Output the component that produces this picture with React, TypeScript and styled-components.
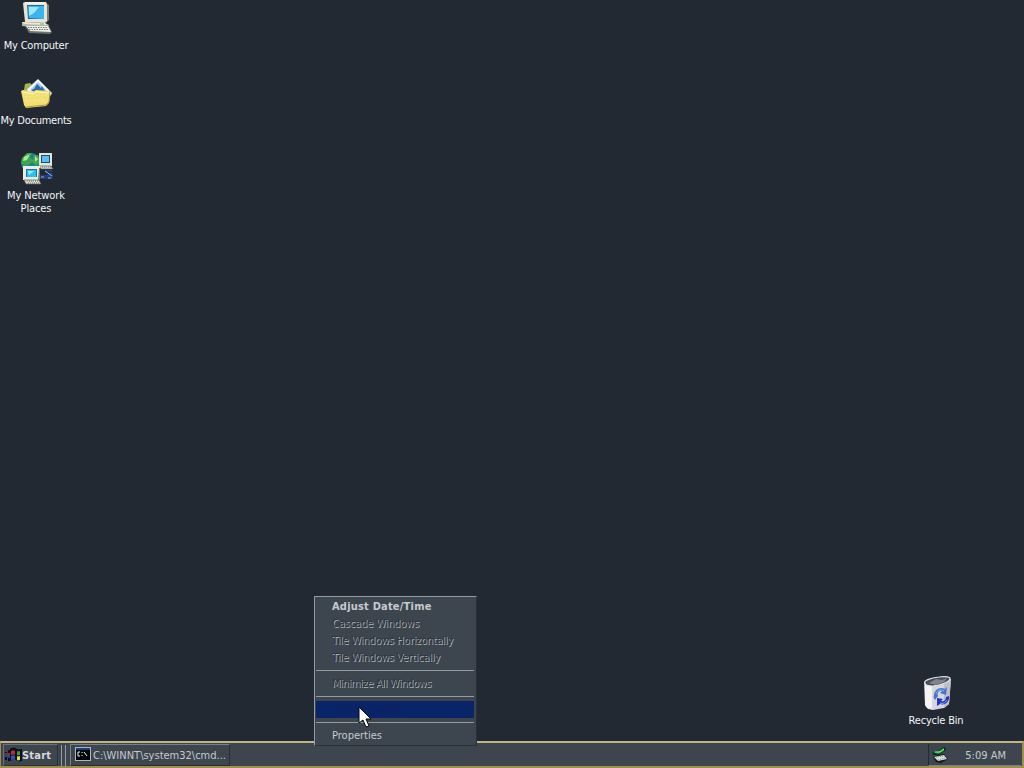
import React from "react";
import styled, { createGlobalStyle } from "styled-components";

const Global = createGlobalStyle`
  * { box-sizing: border-box; }
  body { margin: 0; overflow: hidden; background: #222932; }
`;

const Screen = styled.main`
  position: relative;
  display: flex;
  flex-direction: column;
  width: 1024px;
  height: 768px;
  background: #222932;
  font-family: "DejaVu Sans Condensed", "DejaVu Sans", sans-serif;
  font-stretch: condensed;
  font-size: 11px;
  line-height: 13px;
  color: #c5cad0;
  cursor: default;
`;

const Desktop = styled.section`
  flex: 1;
  display: flex;
  justify-content: space-between;
`;

const IconColumn = styled.div<{ $end?: boolean }>`
  display: flex;
  flex-direction: column;
  justify-content: ${(p) => (p.$end ? "flex-end" : "flex-start")};
  width: ${(p) => (p.$end ? 88 : 72)}px;
  padding-bottom: ${(p) => (p.$end ? 2 : 0)}px;
  margin-right: ${(p) => (p.$end ? 44 : 0)}px;
`;

const Shortcut = styled.div`
  display: flex;
  flex-direction: column;
  align-items: center;
  height: 75px;
  svg { display: block; margin: 1px 0 4px; }
`;

const BinShortcut = styled(Shortcut)`
  height: 65px;
  svg { margin: 0 0 4px; }
`;

const Label = styled.span<{ $spacing?: number }>`
  color: #f4f6f8;
  text-align: center;
  white-space: pre;
  letter-spacing: ${(p) => p.$spacing ?? 0}px;
`;

const Taskbar = styled.footer`
  display: flex;
  align-items: stretch;
  height: 27px;
  padding: 1px 1px 0 2px;
  background: #3d464e;
  border: 2px solid #a18d4e;
  border-top-color: #c4b684;
  border-left-width: 1px;
`;

const StartButton = styled.button`
  display: flex;
  align-items: center;
  width: 55px;
  padding: 0 0 0 1px;
  border: 1px solid;
  border-color: #69727b #2a3036 #2a3036 #69727b;
  background: #3d464e;
  color: #d5d9dd;
  font: bold 11px "DejaVu Sans Condensed", "DejaVu Sans", sans-serif;
  font-stretch: condensed;
  letter-spacing: 0.2px;
`;

const Grip = styled.div`
  width: 5px;
  margin: 1px 4px 0 3px;
  border-left: 1px solid #929aa2;
  border-right: 1px solid #929aa2;
`;

const TaskButton = styled.div`
  display: flex;
  align-items: center;
  gap: 2px;
  width: 160px;
  padding-left: 4px;
  border: 1px solid;
  border-color: #78818a #272d33 #272d33 #78818a;
  white-space: nowrap;
  svg { margin-top: -2px; }
`;

const Tray = styled.div`
  display: flex;
  align-items: center;
  justify-content: space-between;
  width: 93px;
  margin-left: auto;
  padding: 0 15px 0 2px;
  border-left: 1px solid #242a30;
  border-bottom: 1px solid #78818a;
  span { padding-top: 2px; }
`;

const Menu = styled.div`
  position: absolute;
  left: 314px;
  top: 596px;
  width: 163px;
  height: 150px;
  padding: 1px 2px 1px 1px;
  background: #3d464e;
  border: 1px solid;
  border-color: #929aa2 #2a3036 #2a3036 #929aa2;
`;

const MenuItem = styled.div<{ $kind?: "bold" | "disabled" | "selected"; $spacing?: number }>`
  height: 17px;
  padding: 1px 0 0 16px;
  line-height: 15px;
  white-space: nowrap;
  letter-spacing: ${(p) => p.$spacing ?? 0}px;
  font-weight: ${(p) => (p.$kind === "bold" ? "bold" : "normal")};
  color: ${(p) => (p.$kind === "disabled" ? "#2c333b" : p.$kind === "selected" ? "#0b2360" : "#c5cad0")};
  text-shadow: ${(p) => (p.$kind === "disabled" ? "1px 1px 0 #a9b1b9" : "none")};
  background: ${(p) => (p.$kind === "selected" ? "#0a246a" : "transparent")};
`;

const Separator = styled.hr`
  height: 1px;
  margin: 4px 0;
  border: 0;
  background: #929aa2;
`;

const Pointer = styled.svg`
  position: absolute;
  left: 358px;
  top: 706px;
`;

const ComputerIcon = () => (
  <svg width="34" height="34" viewBox="0 0 34 34">
    <path d="M27 2 30 4 30 19 27 22Z" fill="#7f8078" />
    <path d="M4 2 6 1 27 1 28 3 28 20 26 22 6 21Z" fill="#e6e4d2" />
    <path d="M6 2h20" stroke="#fffef4" />
    <path d="M8 4 25 4 25 18 9 18Z" fill="#1c6ca4" />
    <path d="M9 5 25 5 25 18 10 17Z" fill="#3bb5f2" />
    <path d="M10 6h10l-5 6-5 3Z" fill="#a2e7ff" />
    <path d="M3 21 26 22 30 24 29 28 3 25Z" fill="#b8b6a7" />
    <path d="M3 21 26 22 28 24 5 23Z" fill="#e9e7db" />
    <path d="M21 23h4" stroke="#4dc343" />
    <path d="M6 25 30 25 33 31 31 33 10 32Z" fill="#6e706b" />
    <path d="M7 25 29 25 32 31 11 30Z" fill="#eeeee8" />
    <path d="M9 26.5h20M10 28.5h20" stroke="#767970" strokeDasharray="1.5 1" />
  </svg>
);

const DocumentsIcon = () => (
  <svg width="34" height="34" viewBox="0 0 34 34">
    <path d="M5 14 6 8 11 7 14 10 28 12 30 18 27 29 6 29Z" fill="#a8b648" />
    <path d="M7 14 19 3 33 17 27 27Z" fill="#f5f8fd" stroke="#8697aa" strokeWidth=".7" />
    <path d="M11 14 19 6 29 16 25 20Z" fill="#a1cae9" />
    <path d="m12 14 3-1 3-5 4 4 1-2 4 7-5 3Z" fill="#2b6c9e" />
    <path d="M2 15 4 14 14 16 17 14 31 15 30 27 27 30 7 32 5 29Z" fill="#f1df72" />
    <path d="M3 16 14 18 17 16 30 17" fill="none" stroke="#fff8b6" />
    <path d="m7 31 20-2 3-3 1-11" fill="none" stroke="#af963f" />
    <path d="m6 21 22-2M7 25l20-1" stroke="#faea93" strokeDasharray="2 2" />
  </svg>
);

const NetworkIcon = () => (
  <svg width="35" height="34" viewBox="0 0 35 34">
    <circle cx="12" cy="12" r="10" fill="#197f9d" />
    <path d="m3 7 5-5 5 0-2 4 3 4-4 4-5 1-3-3ZM15 4l4 0 2 7-4 4-4-4Z" fill="#3da649" />
    <path d="m5 6 6-3-3 6-4 1M16 5l3 3-3 3" fill="#b2e596" />
    <path d="M20 2h13v13H20z" fill="#e6e3d4" />
    <path d="M22 4h9v8h-9z" fill="#155280" />
    <path d="M23 5h7v6h-7z" fill="#59bff1" />
    <path d="m20 15 12 0 2 3H22z" fill="#d7d5cc" stroke="#505954" strokeWidth=".6" />
    <path d="M4 15h17v14H4z" fill="#eeecdf" />
    <path d="M20 17h1v12h-2" fill="#777a71" />
    <path d="M7 18h11v8H7z" fill="#087bb3" />
    <path d="M8 19h9v7H8z" fill="#2cc0ef" />
    <path d="M9 20h6l-5 4Z" fill="#9becff" />
    <path d="m5 29 15 0 2 4H7z" fill="#e0ded2" stroke="#555c58" strokeWidth=".7" />
    <path d="M8 30h11M9 32h11M23 16h9" stroke="#656e68" strokeDasharray="1 1" />
    <path d="M21 25h13L26 20h7M21 27h13M28 25l5-3" stroke="#2550b9" fill="none" />
    <path d="m26 20 7 5M22 26h3M29 27h3" stroke="#81b8ee" fill="none" />
  </svg>
);

const BinIcon = () => (
  <svg width="32" height="36" viewBox="0 0 32 36">
    <path d="M4 8 8 5 26 3 31 5 29 30 24 34 13 36 8 35 5 31Z" fill="#d7d6df" />
    <path d="M5 9 12 11 12 35 7 34 5 31Z" fill="#f5f3f4" />
    <path d="M24 9 31 5 29 30 24 34Z" fill="#bdbdcc" />
    <path d="M5 9c-2-2 5-5 14-6 7-1 12 0 11 2-1 3-9 6-17 7-5 0-8-1-8-3Z" fill="#454d55" stroke="#dee0e6" strokeWidth="1.2" />
    <path d="m9 9 7-4 6 1 5-2-3 4-8 3Z" fill="#81858a" />
    <path d="M14 21c0-5 6-9 11-6l2-2-1 8-6-2 2-2c-3-1-5 2-4 5l-3 4c-1-2-2-3-1-5Z" fill="#4776c8" />
    <path d="M29 22c1 5-4 10-9 8l-3 2v-8l6 1-2 2c3 1 5-1 5-4Z" fill="#2334c0" />
    <path d="M16 20c1-4 5-5 8-3M20 29c3 1 5 0 7-3" stroke="#75bee7" fill="none" />
  </svg>
);

const WindowsIcon = () => (
  <svg width="17" height="16" viewBox="0 0 17 16">
    <path d="M5 2c3-2 5-1 7 0 2 1 3 0 5 0v12c-3 1-5 0-6-1-2-1-4 0-6 1Z" fill="#0b1018" />
    <path d="M6 4c2-1 3-1 4 0v4c-2-1-3 0-4 0Z" fill="#b52b3a" />
    <path d="M12 4c1 1 2 0 3 0v4c-1 0-2 1-3 0Z" fill="#3a9c3c" />
    <path d="M6 9c2-1 3-1 4 0v4c-2-1-3 0-4 0Z" fill="#3054b5" />
    <path d="M12 9c1 1 2 0 3 0v4c-1 0-2 1-3 0Z" fill="#dfda51" />
    <path d="M3 3h2v3H3zm-3 2h2v1H0zm3 4h2v5H3zm-3 1h2v3H0z" fill="#0b1018" />
    <path d="M3 6h2v2H3zm-3 0h2v1H0z" fill="#9d2941" />
    <path d="M3 9h2v2H3zm-3 0h2v1H0z" fill="#263eb0" />
  </svg>
);

const ConsoleIcon = () => (
  <svg width="16" height="14" viewBox="0 0 16 14">
    <path d="M0 0h16v14H0z" fill="#aeb5bc" />
    <path d="M1 1h14v2H1z" fill="#1b3d80" />
    <path d="M1 3h14v10H1z" fill="#030608" />
    <path d="M5 5H3v4h2M7 5v1m0 2v1m2-4 3 4" stroke="#eef1f4" fill="none" />
  </svg>
);

const TrayIcon = () => (
  <svg width="18" height="18" viewBox="0 0 18 18">
    <path d="M1 7 9 4 13 1 15 2 14 5 7 9 2 9Z" fill="#06331b" />
    <path d="M2 6 8 5 13 2 13 5 7 8Z" fill="#1d9b36" />
    <path d="m4 6 5 0 4-3" stroke="#9be59b" fill="none" />
    <path d="M2 11 7 9 13 8 17 13 10 17 5 16Z" fill="#10191b" />
    <path d="m3 11 10-2 3 4-9 2Z" fill="#d9ded9" />
    <path d="m5 11 8-1m-6 4 7-2" stroke="#7f8b85" strokeDasharray="1 1" />
  </svg>
);

const shortcuts = [
  { label: "My Computer", spacing: -0.2, Icon: ComputerIcon },
  { label: "My Documents", spacing: -0.25, Icon: DocumentsIcon },
  { label: "My Network\nPlaces", spacing: -0.1, Icon: NetworkIcon },
];

export default function App() {
  return (
    <>
      <Global />
      <Screen>
        <Desktop>
          <IconColumn>
            {shortcuts.map(({ label, spacing, Icon }) => (
              <Shortcut key={label}><Icon /><Label $spacing={spacing}>{label}</Label></Shortcut>
            ))}
          </IconColumn>
          <IconColumn $end>
            <BinShortcut><BinIcon /><Label $spacing={-0.2}>Recycle Bin</Label></BinShortcut>
          </IconColumn>
        </Desktop>
        <Taskbar>
          <StartButton><WindowsIcon />Start</StartButton>
          <Grip />
          <TaskButton><ConsoleIcon /><span>C:\WINNT\system32\cmd...</span></TaskButton>
          <Tray><TrayIcon /><span>5:09 AM</span></Tray>
        </Taskbar>
        <Menu>
          <MenuItem $kind="bold" $spacing={0.2}>Adjust Date/Time</MenuItem>
          <MenuItem $kind="disabled" $spacing={-0.15}>Cascade Windows</MenuItem>
          <MenuItem $kind="disabled" $spacing={-0.24}>Tile Windows Horizontally</MenuItem>
          <MenuItem $kind="disabled" $spacing={-0.24}>Tile Windows Vertically</MenuItem>
          <Separator />
          <MenuItem $kind="disabled" $spacing={-0.38}>Minimize All Windows</MenuItem>
          <Separator />
          <MenuItem $kind="selected">Task Manager...</MenuItem>
          <Separator />
          <MenuItem>Properties</MenuItem>
        </Menu>
        <Pointer width="14" height="22" viewBox="0 0 14 22">
          <path d="M1 1v16l4-3 3 7 3-1-3-7h5Z" fill="#fff" stroke="#05070b" />
        </Pointer>
      </Screen>
    </>
  );
}
